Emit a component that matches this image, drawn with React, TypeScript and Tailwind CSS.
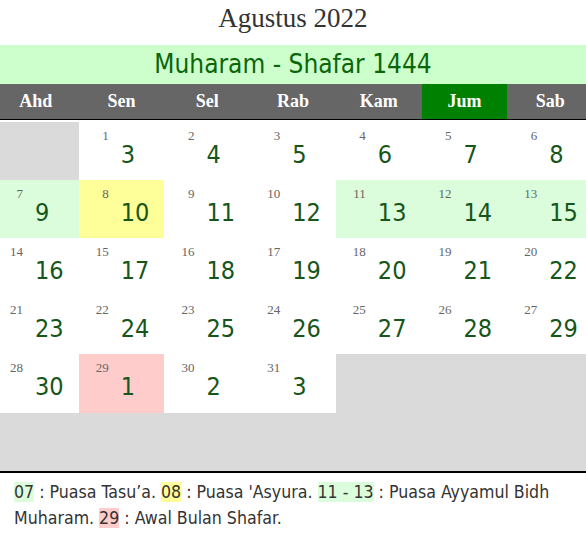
const serif = "font-['Liberation_Serif','Times_New_Roman',serif]";
const tahoma = "font-['DejaVu_Sans_Condensed','DejaVu_Sans',sans-serif]";

type Cell = { g?: number; h?: number; bg?: string };

const days = ["Ahd", "Sen", "Sel", "Rab", "Kam", "Jum", "Sab"];

const green = "bg-[#dcfddc]";
const yellow = "bg-[#ffff99]";
const pink = "bg-[#ffcccc]";

const rows: Cell[][] = [
  [{}, { g: 1, h: 3 }, { g: 2, h: 4 }, { g: 3, h: 5 }, { g: 4, h: 6 }, { g: 5, h: 7 }, { g: 6, h: 8 }],
  [
    { g: 7, h: 9, bg: green },
    { g: 8, h: 10, bg: yellow },
    { g: 9, h: 11 },
    { g: 10, h: 12 },
    { g: 11, h: 13, bg: green },
    { g: 12, h: 14, bg: green },
    { g: 13, h: 15, bg: green },
  ],
  [14, 15, 16, 17, 18, 19, 20].map((g) => ({ g, h: g + 2 })),
  [21, 22, 23, 24, 25, 26, 27].map((g) => ({ g, h: g + 2 })),
  [{ g: 28, h: 30 }, { g: 29, h: 1, bg: pink }, { g: 30, h: 2 }, { g: 31, h: 3 }, {}, {}, {}],
  [{}, {}, {}, {}, {}, {}, {}],
];

function DayCell({ cell, tall }: { cell: Cell; tall: boolean }) {
  const empty = cell.g === undefined;
  return (
    <div
      className={`${tall ? "h-[59px]" : "h-[58px]"} ${empty ? "bg-[#dadada]" : cell.bg ?? "bg-white"} flex flex-col pt-[7px]`}
    >
      {!empty && (
        <>
          <span className={`${serif} block w-[30px] text-right text-[13px] leading-[13px] text-[#666]`}>{cell.g}</span>
          <span className={`${tahoma} block pl-[42px] text-[25px] leading-[26px] text-[#17561a]`}>{cell.h}</span>
        </>
      )}
    </div>
  );
}

export default function App() {
  return (
    <div className="w-[586px] h-[556px] overflow-hidden bg-white">
      <h1 className={`${serif} h-[45px] pt-[2px] text-center text-[27px] leading-[32px] text-[#333]`}>Agustus 2022</h1>
      <div className={`${tahoma} flex h-[39px] items-center justify-center bg-[#ccffcc] text-[26px] text-[#0b650b]`}>
        Muharam - Shafar 1444
      </div>

      <div className="overflow-hidden">
        <div className="-ml-[7px] w-[600px]">
          <div className="grid h-[36px] grid-cols-7 border-b border-black">
            {days.map((d) => (
              <div
                key={d}
                className={`${serif} flex items-center justify-center text-[18px] font-bold text-white ${d === "Jum" ? "bg-[#008000]" : "bg-[#666]"}`}
              >
                {d}
              </div>
            ))}
          </div>
          <div className="pt-[2px]">
            {rows.map((row, i) => (
              <div key={i} className="grid grid-cols-7">
                {row.map((c, j) => (
                  <DayCell key={j} cell={c} tall={i === 4} />
                ))}
              </div>
            ))}
          </div>
        </div>
      </div>

      <div className={`${tahoma} border-t-2 border-black px-[14px] pt-[6px] text-[17.6px] leading-[26px] text-[#333]`}>
        <span className="bg-[#dcfddc]">07</span> : Puasa Tasu’a. <span className="bg-[#ffff99]">08</span> : Puasa 'Asyura.{" "}
        <span className="bg-[#dcfddc]">11 - 13</span> : Puasa Ayyamul Bidh
        <br />
        Muharam. <span className="bg-[#ffcccc]">29</span> : Awal Bulan Shafar.
      </div>
    </div>
  );
}
